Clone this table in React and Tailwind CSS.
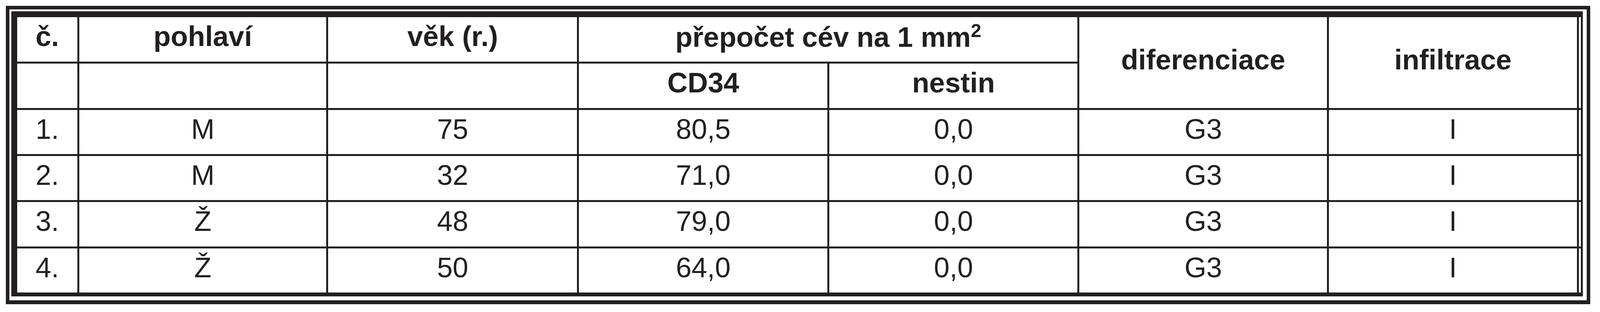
import React from "react";

const font = { fontFamily: '"Liberation Sans", Arial, Helvetica, sans-serif' };

function Cell({ children, bold = false, className = "" }) {
  return (
    <div
      className={`bg-white flex items-center justify-center pb-[16px] text-[72px] leading-none text-[#231f20] whitespace-nowrap ${
        bold ? "font-bold" : "font-normal"
      } ${className}`}
    >
      {children}
    </div>
  );
}

const rows = [
  ["1.", "M", "75", "80,5", "0,0", "G3", "I"],
  ["2.", "M", "32", "71,0", "0,0", "G3", "I"],
  ["3.", "Ž", "48", "79,0", "0,0", "G3", "I"],
  ["4.", "Ž", "50", "64,0", "0,0", "G3", "I"],
];

export default function App() {
  return (
    <div className="w-full h-[800px] bg-white pt-[15px] pl-[15px] pr-[25px]" style={font}>
      <div className="border-[9px] border-b-[10px] border-[#231f20] bg-white pt-[5px] pl-[5px] pr-[10px] pb-[10px]">
        <div className="border-[#231f20] border-solid border-l-[15px] border-t-[15px] border-r-[5px] border-b-[10px]">
          <div className="grid grid-cols-[173fr_711fr_716fr_715fr_714fr_712fr_714fr_5px] grid-rows-[114px_114px_113px_113px_114px_113px] gap-[5px] bg-[#231f20]">
            <Cell bold>č.</Cell>
            <Cell bold>pohlaví</Cell>
            <Cell bold>věk (r.)</Cell>
            <Cell bold className="col-span-2">
              <span>
                přepočet cév na 1 mm<span className="text-[48px] align-super leading-none">2</span>
              </span>
            </Cell>
            <Cell bold className="row-span-2">diferenciace</Cell>
            <Cell bold className="row-span-2">infiltrace</Cell>
            <div className="bg-white row-span-2" />

            <Cell />
            <Cell />
            <Cell />
            <Cell bold>CD34</Cell>
            <Cell bold>nestin</Cell>

            {rows.map((r, i) => (
              <React.Fragment key={i}>
                {r.map((v, j) => (
                  <Cell key={j}>{v}</Cell>
                ))}
                <div className="bg-white" />
              </React.Fragment>
            ))}
          </div>
        </div>
      </div>
    </div>
  );
}
